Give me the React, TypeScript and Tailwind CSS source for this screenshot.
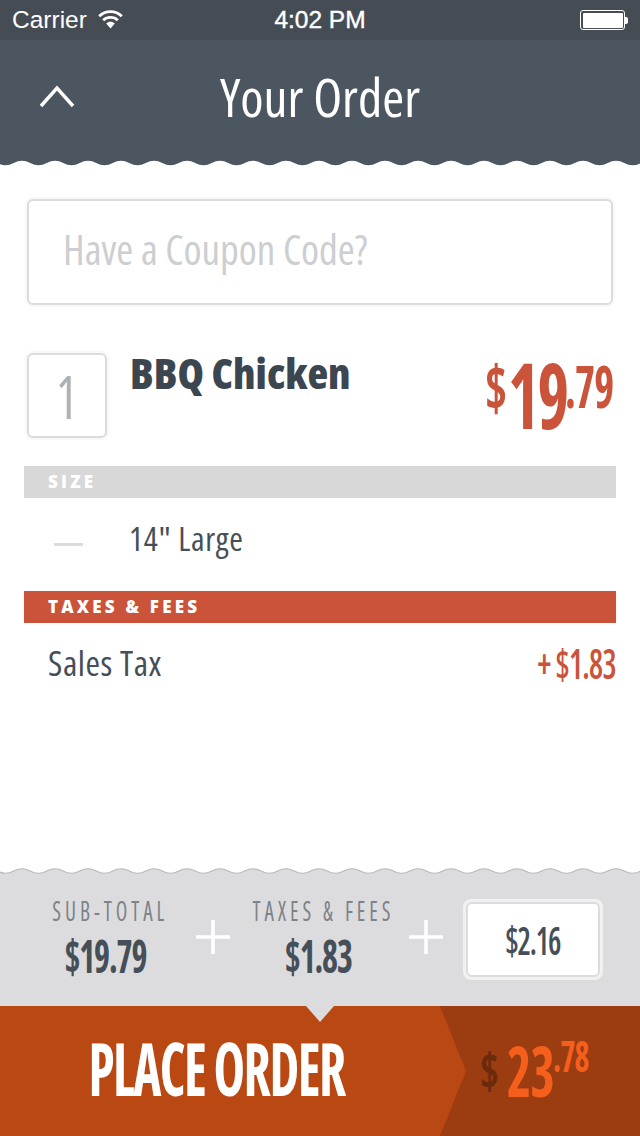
const cond = "font-['Open_Sans','Liberation_Sans',sans-serif] [font-stretch:75%]";

// scalloped edge between two bands, period 33px
function Wave({ top, bottom, stroke }: { top: string; bottom: string; stroke?: string }) {
  let d = "M-19.25 4";
  for (let x = -19; x < 660; x += 33) {
    d += ` q8.25 -4.5 16.5 0 q8.25 4.5 16.5 0`;
  }
  return (
    <svg width="640" height="8" viewBox="0 0 640 8" className="block shrink-0">
      <rect width="640" height="8" fill={top} />
      <path d={`${d} V8 H-19.25 Z`} fill={bottom} />
      {stroke && <path d={d} fill="none" stroke={stroke} strokeWidth="1.2" />}
    </svg>
  );
}

function SectionBar({ label, color }: { label: string; color: string }) {
  return (
    <div className={`mx-6 h-8 pl-6 flex items-center ${color}`}>
      <span className="font-['Open_Sans',sans-serif] font-extrabold text-[17px] tracking-[3.2px] text-white">{label}</span>
    </div>
  );
}

function Total({ label, value }: { label: string; value: string }) {
  return (
    <div className="w-[150px] flex flex-col items-center shrink-0">
      <div className={`${cond} text-[28px] leading-[28px] tracking-[5.2px] whitespace-nowrap text-[#7d8389] scale-x-[0.76]`}>{label}</div>
      <div className={`${cond} mt-2 mr-[10px] font-bold text-[46px] leading-[46px] text-[#464f58] tracking-[-1.5px] scale-x-[0.74]`}>{value}</div>
    </div>
  );
}

function Plus({ className }: { className: string }) {
  return (
    <svg width="34" height="34" viewBox="0 0 34 34" className={`shrink-0 mt-[24px] ${className}`}>
      <path d="M0 17H34M17 0V34" stroke="#fff" strokeWidth="3.5" />
    </svg>
  );
}

export default function App() {
  return (
    <div className="w-[640px] h-[1136px] flex flex-col bg-white overflow-hidden">
      {/* Status bar */}
      <div className="h-10 shrink-0 bg-[#454c54] px-3 flex items-center justify-between text-white font-['Liberation_Sans',sans-serif] text-[24.5px] relative">
        <div className="flex items-center gap-[11px]">
          <span>Carrier</span>
          <svg width="25" height="20" viewBox="0 0 25 20" className="mt-[-3px]">
            <path d="M1.2 7.2C7.5 1 17.500 1 23.800 7.200" fill="none" stroke="#fff" strokeWidth="2.800" />
            <path d="M5.200 11.200C9.200 7.500 15.800 7.500 19.800 11.200" fill="none" stroke="#fff" strokeWidth="2.800" />
            <path d="M8.200 14.400L12.500 19.500L16.800 14.400C14.400 12.300 10.600 12.300 8.200 14.400Z" fill="#fff" />
          </svg>
        </div>
        <span className="absolute left-0 right-0 text-center [-webkit-text-stroke:0.4px_#fff]">4:02 PM</span>
        <div className="flex items-center">
          <div className="w-[45px] h-[20px] rounded-[3px] border border-white p-[1.5px]">
            <div className="w-full h-full bg-white rounded-[1px]" />
          </div>
          <div className="w-[3px] h-[7px] bg-white rounded-r-[2px]" />
        </div>
      </div>

      {/* Header */}
      <div className="h-[119px] shrink-0 bg-[#4c5660] relative flex items-center justify-center">
        <svg width="36" height="24" viewBox="0 0 36 24" className="absolute left-[39px] top-[44px]">
          <path d="M2 22L18 4L34 22" fill="none" stroke="#fff" strokeWidth="3.4" />
        </svg>
        <span className={`${cond} text-[53px] leading-[70px] text-white mt-[-6px]`}>Your Order</span>
      </div>
      <Wave top="#4c5660" bottom="#ffffff" />

      {/* Coupon */}
      <div className="mx-[27px] mt-[32px] h-[106px] rounded-[6px] border-2 border-[#dcdcdc] shadow-[0_0_0_2px_#f8f8f8] flex items-center pl-[34px]">
        <span className={`${cond} text-[41px] leading-[56px] text-[#ccced1] mt-[-6px]`}>Have a Coupon Code?</span>
      </div>

      {/* Item */}
      <div className="ml-[27px] mr-[29px] mt-[48px] h-[113px] flex items-start">
        <div className="w-[80px] h-[85px] rounded-[6px] border-2 border-[#dcdcdc] shadow-[0_0_0_2px_#f8f8f8] flex items-center justify-center">
          <span className={`${cond} text-[60px] leading-[70px] text-[#afb2b5] scale-x-[0.85]`}>1</span>
        </div>
        <div className={`${cond} ml-[23px] mt-[-3px] text-[42.6px] leading-[44px] font-extrabold text-[#3c4650]`}>BBQ Chicken</div>
        <div className={`${cond} ml-auto flex items-start font-bold text-[#cb5339] whitespace-nowrap`}>
          <span className="w-[23px] origin-left scale-x-[0.76] text-[62px] leading-[70px] mt-[-1px]">$</span>
          <span className="w-[57px] origin-left scale-x-[0.74] text-[91px] leading-[100px] tracking-[-3px] mt-[-9px]">19</span>
          <span className="w-[46px] origin-left scale-x-[0.72] text-[59px] leading-[70px] tracking-[-1px] mt-[-3px]">.79</span>
        </div>
      </div>

      <SectionBar label="SIZE" color="bg-[#d8d8d8]" />
      <div className="h-[93px] flex items-center pl-[54px]">
        <div className="w-[29px] h-[3px] bg-[#dcdcdc]" />
        <span className={`${cond} ml-[46px] mt-[-12px] text-[33px] leading-[44px] text-[#464f58] tracking-[0.7px]`}>14" Large</span>
      </div>
      <SectionBar label="TAXES &amp; FEES" color="bg-[#cb533a]" />
      <div className="h-[84px] mx-6 pl-6 flex items-center justify-between">
        <span className={`${cond} text-[35px] leading-[44px] text-[#464f58] tracking-[0.55px] mt-[-4px]`}>Sales Tax</span>
        <span className={`${cond} origin-right scale-x-[0.75] text-[42px] leading-[50px] font-semibold text-[#cb533a] tracking-[-1px] mt-[-4px]`}>+ $1.83</span>
      </div>

      <div className="flex-1" />

      {/* Totals */}
      <Wave top="#ffffff" bottom="#dcdcde" stroke="#b9b9b9" />
      <div className="h-[131px] shrink-0 bg-[#dcdcde] flex items-start pl-[35px] pt-[21px]">
        <Total label="SUB-TOTAL" value="$19.79" />
        <Plus className="ml-[11px]" />
        <div className="ml-[18px]">
          <Total label="TAXES & FEES" value="$1.83" />
        </div>
        <Plus className="ml-[11px]" />
        <div className="ml-[20px] mt-[3px] w-[140px] h-[81px] rounded-[8px] bg-white/60 p-[3px]">
          <div className="w-full h-full rounded-[6px] bg-white border-2 border-[#dcdcdc] flex items-center justify-center">
            <span className={`${cond} font-semibold text-[40px] leading-[50px] text-[#464f58] tracking-[-1.5px] scale-x-[0.75]`}>$2.16</span>
          </div>
        </div>
      </div>

      {/* Place order */}
      <div className="h-[130px] shrink-0 bg-[#9c3c11] flex relative">
        <div className="w-[466px] bg-[#b94813] [clip-path:polygon(0_0,440px_0,466px_50%,440px_100%,0_100%)] flex items-center justify-center pr-[32px]">
          <span className={`${cond} font-bold text-[73px] leading-[90px] text-white tracking-[-2px] whitespace-nowrap scale-x-[0.73] mt-[-6px]`}>PLACE ORDER</span>
        </div>
        <div className="absolute left-[306px] top-0 w-0 h-0 border-x-[14px] border-x-transparent border-t-[16px] border-t-[#dcdcde]" />
        <div className={`${cond} flex items-start font-bold ml-[14px] mt-[22px] whitespace-nowrap`}>
          <span className="w-[27px] origin-left scale-x-[0.8] text-[#6b2a0c] text-[50px] leading-[60px] mt-[12px]">$</span>
          <span className="w-[46px] origin-left scale-x-[0.74] text-[#f55f1c] text-[70px] leading-[90px] tracking-[-1px] mt-[-3px]">23</span>
          <span className="w-[40px] origin-left scale-x-[0.76] text-[#f55f1c] text-[42px] leading-[50px] tracking-[-1px] mt-[3px]">.78</span>
        </div>
      </div>
    </div>
  );
}
